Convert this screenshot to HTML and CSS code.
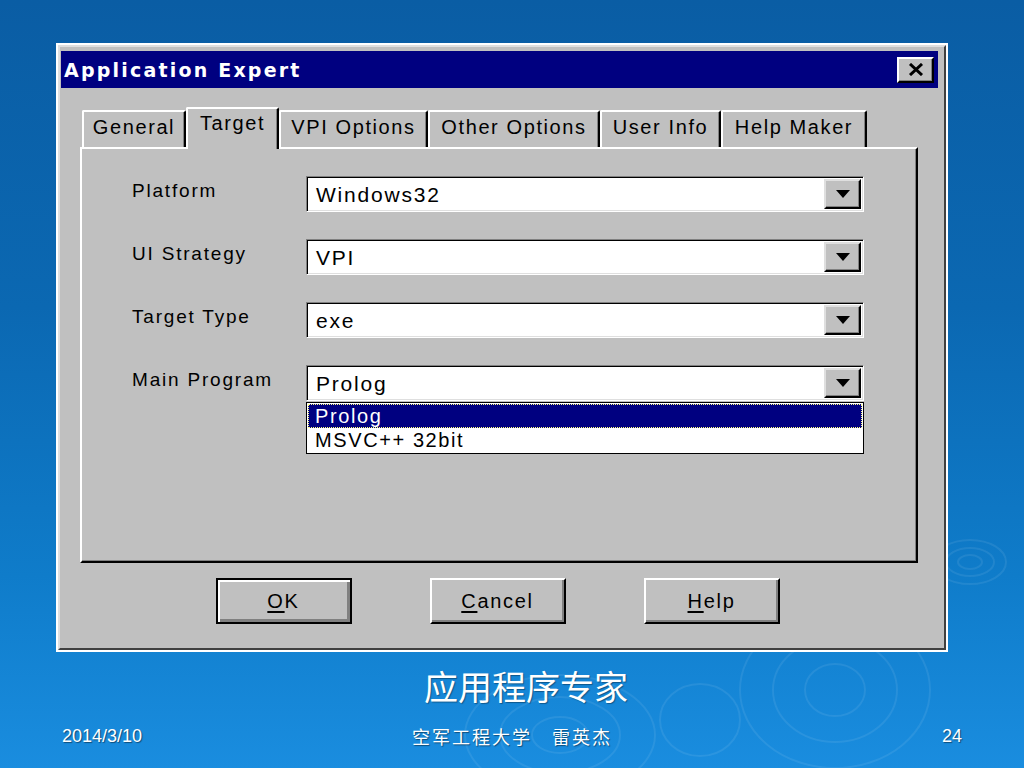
FILE: index.html
```html
<!DOCTYPE html>
<html lang="zh-CN">
<head>
    <meta charset="UTF-8">
    <title>应用程序专家</title>
    <link rel="stylesheet" href="styles.css">
</head>
<body>
    <div class="slide">
        <!-- water ripples on the slide background -->
        <svg class="ripples" width="1024" height="768" viewBox="0 0 1024 768">
            <g fill="none" stroke="#ffffff" stroke-opacity="0.08" stroke-width="2">
                <ellipse cx="970" cy="562" rx="12" ry="7"/>
                <ellipse cx="970" cy="562" rx="24" ry="14"/>
                <ellipse cx="970" cy="562" rx="36" ry="22"/>
                <ellipse cx="835" cy="690" rx="30" ry="26"/>
                <ellipse cx="835" cy="690" rx="62" ry="52"/>
                <ellipse cx="835" cy="690" rx="95" ry="78"/>
                <ellipse cx="560" cy="735" rx="28" ry="18"/>
                <ellipse cx="560" cy="735" rx="60" ry="38"/>
                <ellipse cx="560" cy="735" rx="95" ry="60"/>
                <ellipse cx="700" cy="720" rx="40" ry="36"/>
            </g>
        </svg>

        <div class="frame">
            <div class="window">
                <div class="titlebar">
                    <span class="title">Application Expert</span>
                    <div class="close">
                        <svg width="16" height="13" viewBox="0 0 16 13">
                            <path d="M2 1 L14 12 M14 1 L2 12" stroke="#000" stroke-width="3"/>
                        </svg>
                    </div>
                </div>

                <div class="tabs">
                    <div class="tab tab-general">General</div>
                    <div class="tab tab-target active">Target</div>
                    <div class="tab tab-vpi">VPI Options</div>
                    <div class="tab tab-other">Other Options</div>
                    <div class="tab tab-user">User Info</div>
                    <div class="tab tab-help">Help Maker</div>
                </div>

                <div class="panel">
                    <div class="row">
                        <span class="label">Platform</span>
                        <div class="combo">
                            <span class="value">Windows32</span>
                            <span class="drop"><svg width="16" height="8" viewBox="0 0 16 8"><polygon points="1,0 15,0 8,8" fill="#000"/></svg></span>
                        </div>
                    </div>
                    <div class="row">
                        <span class="label">UI Strategy</span>
                        <div class="combo">
                            <span class="value">VPI</span>
                            <span class="drop"><svg width="16" height="8" viewBox="0 0 16 8"><polygon points="1,0 15,0 8,8" fill="#000"/></svg></span>
                        </div>
                    </div>
                    <div class="row">
                        <span class="label">Target Type</span>
                        <div class="combo">
                            <span class="value">exe</span>
                            <span class="drop"><svg width="16" height="8" viewBox="0 0 16 8"><polygon points="1,0 15,0 8,8" fill="#000"/></svg></span>
                        </div>
                    </div>
                    <div class="row">
                        <span class="label">Main Program</span>
                        <div class="combo open">
                            <span class="value">Prolog</span>
                            <span class="drop"><svg width="16" height="8" viewBox="0 0 16 8"><polygon points="1,0 15,0 8,8" fill="#000"/></svg></span>
                            <ul class="list">
                                <li class="selected">Prolog</li>
                                <li>MSVC++ 32bit</li>
                            </ul>
                        </div>
                    </div>
                </div>

                <div class="actions">
                    <div class="btn default"><u>O</u>K</div>
                    <div class="btn"><u>C</u>ancel</div>
                    <div class="btn"><u>H</u>elp</div>
                </div>
            </div>
        </div>

        <div class="caption">应用程序专家</div>

        <div class="footer">
            <span class="date">2014/3/10</span>
            <span class="author">空军工程大学　雷英杰</span>
            <span class="page">24</span>
        </div>
    </div>
</body>
</html>
```

FILE: styles.css
```css
body {
    margin: 0;
    width: 1024px;
    height: 768px;
    overflow: hidden;
    font-family: 'Liberation Sans', Arial, sans-serif;
}
.slide {
    position: relative;
    width: 1024px;
    height: 768px;
    box-sizing: border-box;
    padding: 43px 76px 0 56px;
    background: linear-gradient(180deg, #0a5da4 0%, #0b68b2 40%, #0f7cca 75%, #1a8ddf 100%);
}
.ripples {
    position: absolute;
    left: 0;
    top: 0;
}

/* dialog picture */
.frame {
    position: relative;
    width: 892px;
    height: 609px;
    box-sizing: border-box;
    padding: 2px;
    background: #fff;
}
.window {
    height: 100%;
    box-sizing: border-box;
    border: 2px solid;
    border-color: #dfdfdf #404040 #404040 #dfdfdf;
    background: #c0c0c0;
    padding: 4px 6px 0 1px;
}
.titlebar {
    height: 37px;
    background: #000080;
    display: flex;
    align-items: center;
    justify-content: space-between;
    padding: 0 4px 0 3px;
}
.title {
    color: #fff;
    font-family: 'DejaVu Sans', sans-serif;
    font-weight: bold;
    font-size: 19px;
    letter-spacing: 2.2px;
}
.close {
    width: 37px;
    height: 26px;
    box-sizing: border-box;
    background: #c0c0c0;
    border: 2px solid;
    border-color: #fff #000 #000 #fff;
    box-shadow: inset -1px -1px #808080;
    display: flex;
    align-items: center;
    justify-content: center;
}

/* tabs */
.tabs {
    display: flex;
    align-items: flex-end;
    height: 40px;
    margin: 19px 0 0 19px;
    padding-left: 2px;
    position: relative;
    z-index: 1;
}
.tab {
    height: 37px;
    box-sizing: border-box;
    border-top: 2px solid #fff;
    border-left: 2px solid #fff;
    border-right: 2px solid #000;
    box-shadow: inset -1px 0 #808080;
    border-radius: 2px 2px 0 0;
    font-size: 20px;
    letter-spacing: 1.6px;
    color: #000;
    display: flex;
    align-items: center;
    justify-content: center;
    padding-bottom: 4px;
}
.tab.active {
    height: 42px;
    margin-bottom: -2px;
    background: #c0c0c0;
    padding-bottom: 12px;
}
.tab-general { width: 104px; }
.tab-target { width: 93px; }
.tab-vpi { width: 149px; }
.tab-other { width: 172px; }
.tab-user { width: 121px; }
.tab-help { width: 146px; }

.panel {
    width: 838px;
    height: 416px;
    box-sizing: border-box;
    margin-left: 19px;
    border-top: 2px solid #fff;
    border-left: 2px solid #fff;
    border-right: 2px solid #000;
    border-bottom: 2px solid #000;
    box-shadow: inset -1px -1px #808080;
    padding: 27px 0 0 50px;
    display: flex;
    flex-direction: column;
    gap: 27px;
}
.row {
    display: flex;
    align-items: center;
}
.label {
    width: 174px;
    font-size: 19px;
    letter-spacing: 1.8px;
    padding-bottom: 6px;
}
.combo {
    position: relative;
    width: 558px;
    height: 36px;
    box-sizing: border-box;
    border: 1px solid;
    border-color: #808080 #fff #fff #808080;
    box-shadow: inset 1px 1px #000, inset -1px -1px #dfdfdf;
    background: #fff;
    display: flex;
    align-items: center;
    justify-content: space-between;
    padding: 2px 2px 2px 9px;
}
.value {
    font-size: 21px;
    letter-spacing: 1.8px;
    padding-top: 2px;
}
.drop {
    width: 37px;
    height: 100%;
    box-sizing: border-box;
    background: #c0c0c0;
    border: 2px solid;
    border-color: #dfdfdf #000 #000 #dfdfdf;
    box-shadow: inset -1px -1px #808080;
    display: flex;
    align-items: center;
    justify-content: center;
}
.list {
    position: absolute;
    left: -1px;
    right: -1px;
    top: 100%;
    margin: 2px 0 0;
    padding: 1px;
    list-style: none;
    background: #fff;
    border: 1px solid #000;
}
.list li {
    height: 24px;
    line-height: 24px;
    padding-left: 7px;
    font-size: 20px;
    letter-spacing: 1.6px;
}
.list li.selected {
    background: #000080;
    color: #fff;
    outline: 1px dotted #ffff80;
    outline-offset: -1px;
}

/* buttons */
.actions {
    display: flex;
    justify-content: center;
    gap: 78px;
    margin-top: 15px;
    padding-right: 4px;
}
.btn {
    width: 136px;
    height: 46px;
    box-sizing: border-box;
    border: 2px solid;
    border-color: #fff #000 #000 #fff;
    box-shadow: inset -2px -2px #808080;
    display: flex;
    align-items: center;
    justify-content: center;
    font-size: 20px;
    letter-spacing: 1.7px;
}
.btn.default {
    border: 2px solid #000;
    box-shadow: inset 2px 2px #fff, inset -3px -3px #808080;
}
.btn u {
    text-underline-offset: 3px;
}

/* slide texts */
.caption {
    position: relative;
    margin-top: 14px;
    padding-left: 24px;
    text-align: center;
    width: 892px;
    font-family: 'Noto Sans CJK SC', sans-serif;
    font-size: 34px;
    line-height: 40px;
    color: #fff;
    text-shadow: 1px 1px 1px rgba(0,0,0,0.35);
}
.footer {
    position: relative;
    display: grid;
    grid-template-columns: 1fr auto 1fr;
    margin: 17px -76px 0 -56px;
    padding: 0 62px;
    height: 24px;
    align-items: center;
    color: #fff;
    text-shadow: 1px 1px 1px rgba(0,0,0,0.45);
}
.date, .page {
    font-size: 18px;
}
.page {
    justify-self: end;
}
.author {
    font-family: 'Noto Sans CJK SC', sans-serif;
    font-size: 18px;
    letter-spacing: 2px;
}
```
